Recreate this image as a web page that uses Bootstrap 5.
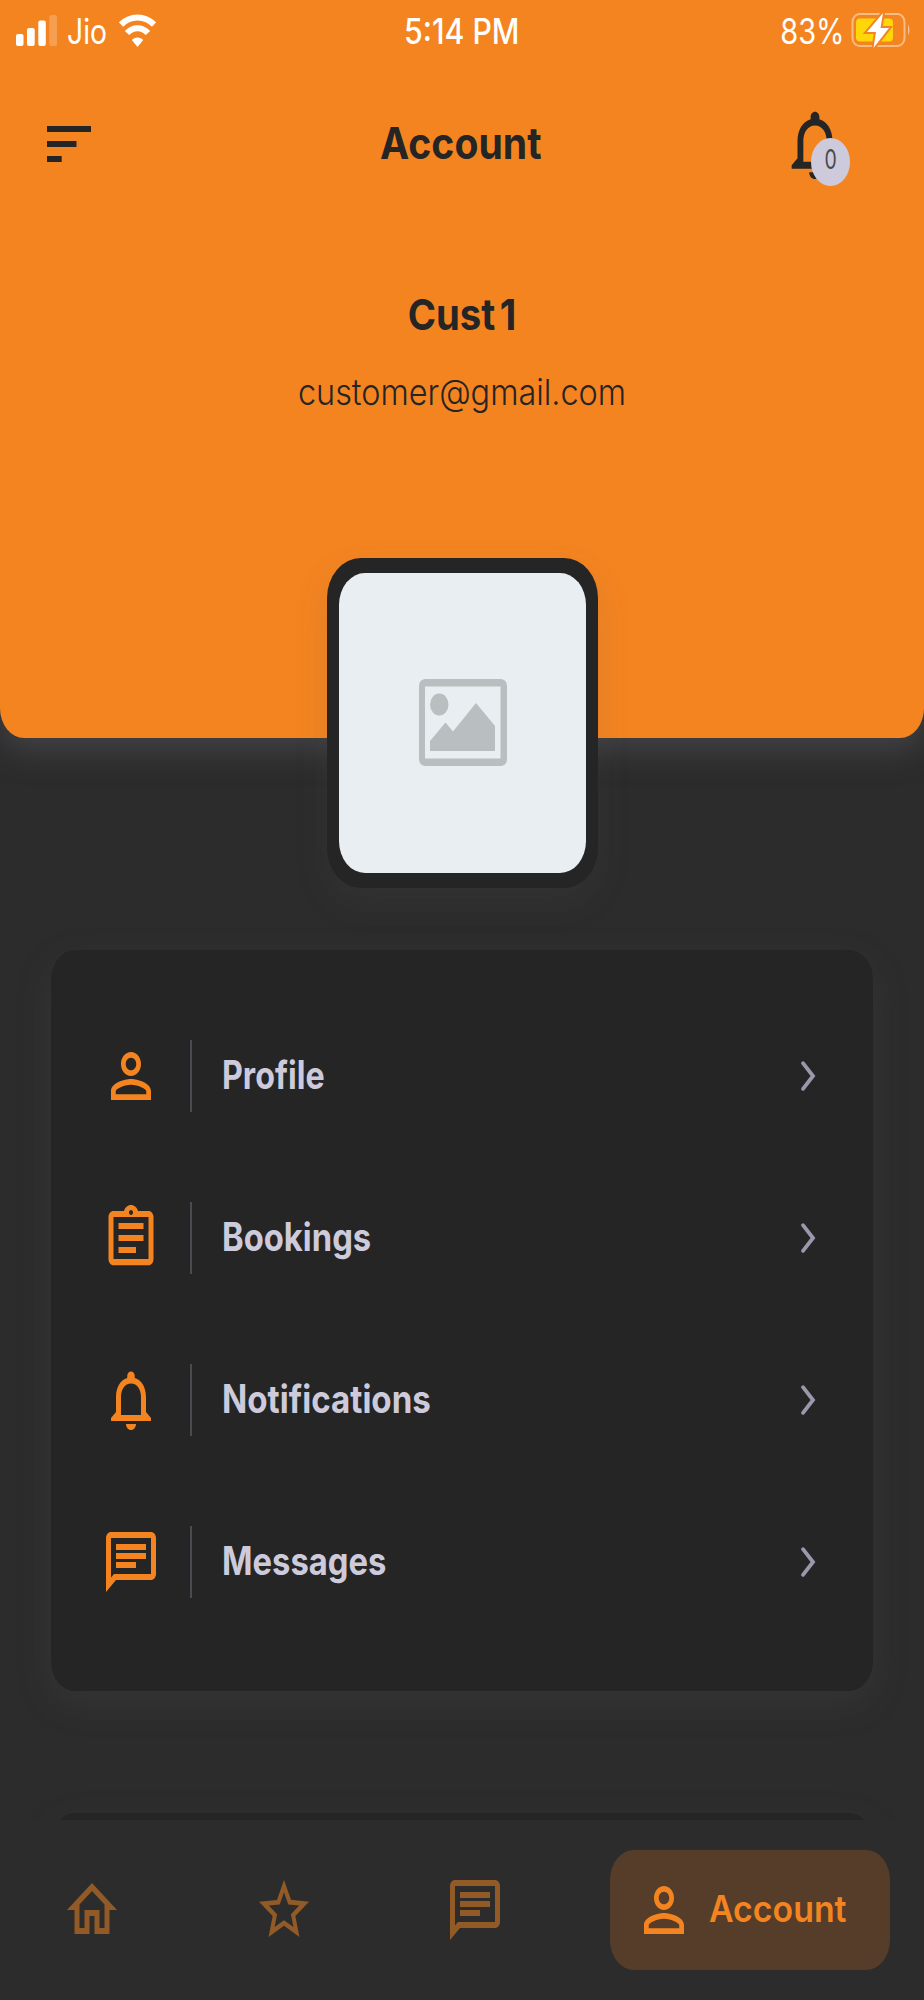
<!DOCTYPE html>
<html lang="en">
<head>
<meta charset="utf-8">
<meta name="viewport" content="width=device-width, initial-scale=1">
<title>Account</title>
<link href="https://cdn.jsdelivr.net/npm/bootstrap@5.3.0/dist/css/bootstrap.min.css" rel="stylesheet">
<style>
  :root { --brand: #f48420; --ink: #252525; --lilac: #cdcbdb; }
  body { font-family: Inter, "Liberation Sans", sans-serif; background: #2c2c2c; color: var(--ink); }
  .screen { height: 2000px; }
  svg { display: block; flex: none; }
  .tx { display: inline-block; white-space: nowrap; line-height: 1.2; }
  .from-start { transform-origin: left center; }
  .from-end { transform-origin: right center; }

  .hero { height: 738px; background: var(--brand); border-radius: 0 0 24px 24px / 0 0 30px 30px; box-shadow: 0 13px 30px rgba(88, 88, 96, .5); z-index: 1; }
  .status { height: 62px; padding: 0 13px 0 16px; color: #fff; font-size: 35px; }
  .jio { transform: scaleX(.81); font-weight: 400; margin-left: 9px; width: 52px; }
  .clock { transform: scaleX(.865); font-weight: 500; }
  .percent { transform: scaleX(.83); font-weight: 400; margin-right: 6px; }
  .appbar { height: 84px; margin-top: 40px; padding: 0 74px 0 47px; }
  .title-txt { font-size: 44px; font-weight: 700; transform: scaleX(.89); margin: -2px 2px 0 0; }
  .count { left: 31px; top: 35px; width: 39px; height: 48px; border-radius: 50%; background: var(--lilac); color: #4a4a4e; font-size: 27px; font-weight: 400; padding-bottom: 3px; }
  .count .tx { transform: scaleX(.72); }
  .who { font-size: 43px; font-weight: 700; transform: scaleX(.89); word-spacing: -5px; line-height: 52px; margin-top: 102px; }
  .mail { font-size: 36px; font-weight: 300; transform: scaleX(.9); line-height: 44px; margin-top: 30px; }

  .avatar { left: 50%; margin-left: -135.5px; top: 557.5px; width: 271px; height: 330px; padding: 15px 12px; background: var(--ink); border-radius: 34px / 40px; box-shadow: 0 14px 34px rgba(92, 92, 100, .14); }
  .avatar-in { background: #e8eef1; border-radius: 26px / 32px; padding-left: 1px; }

  .panel { margin: 0 51px; background: var(--ink); border-radius: 24px / 30px; box-shadow: 0 12px 36px rgba(92, 92, 100, .2); }
  .menu { margin-top: 212px; height: 741px; padding-top: 90px; }
  .line { height: 72px; margin-bottom: 90px; padding: 0 57px 0 50px; color: var(--brand); }
  .line .rule { width: 2px; height: 72px; background: #4a4a50; margin: 0 31px 0 29px; }
  .line .tx { font-size: 39px; font-weight: 650; color: var(--lilac); margin: -2px 0 0 -1px; }
  .next-panel { margin-top: 122px; height: 200px; }

  .tabs { height: 180px; background: #2c2c2c; color: #925a27; padding: 30px 34.5px 30px 62px; gap: 131.5px; z-index: 2; }
  .tabs a { color: inherit; }
  .pill { width: 280px; height: 120px; border-radius: 24px / 30px; background: #553d2a; padding-left: 24px; margin-left: -27px; }
  .tabs .pill { color: var(--brand); }
  .pill .tx { font-size: 37px; font-weight: 600; transform: scaleX(.915); margin: -2px 0 0 15px; }
</style>
</head>
<body>
<svg width="0" height="0" class="position-absolute" aria-hidden="true">
  <symbol id="person" viewBox="0 0 24 24" preserveAspectRatio="none"><path d="M12 5.9c1.16 0 2.1.94 2.1 2.1s-.94 2.1-2.1 2.1S9.900 9.160 9.900 8s.94-2.100 2.100-2.100m0 9c2.970 0 6.100 1.460 6.100 2.100v1.100H5.900V17c0-.64 3.130-2.100 6.100-2.100M12 4C9.790 4 8 5.790 8 8s1.790 4 4 4 4-1.790 4-4-1.790-4-4-4zm0 9c-2.670 0-8 1.340-8 4v3h16v-3c0-2.660-5.330-4-8-4z"/></symbol>
  <symbol id="clip" viewBox="0 0 24 24" preserveAspectRatio="none"><path fill-rule="evenodd" d="M7 15h7v2H7zM7 11h10v2H7zM7 7h10v2H7zM19 3h-4.180C14.400 1.840 13.300 1 12 1s-2.400.84-2.820 2H5c-1.100 0-2 .9-2 2v14c0 1.200.9 2.100 2 2.100h14c1.100 0 2-.9 2-2.100V5c0-1.100-.9-2-2-2zm-7-.3c.45 0 .8.35.8.8s-.35.8-.8.8-.8-.35-.8-.8.35-.8.8-.8zM19 19H5V5h14v14z"/></symbol>
  <symbol id="bell" viewBox="0 0 24 24" preserveAspectRatio="none"><path fill-rule="evenodd" d="M12 22c1.100 0 2-.9 2-2h-4c0 1.100.9 2 2 2zm6-6v-5c0-3.070-1.630-5.640-4.500-6.320V4c0-.83-.67-1.500-1.500-1.500s-1.500.67-1.500 1.500v.68C7.640 5.360 6 7.920 6 11v5l-2 2v1h16v-1l-2-2zm-2 1H8v-6c0-2.480 1.510-4.500 4-4.500s4 2.020 4 4.500v6z"/></symbol>
  <symbol id="chat" viewBox="0 0 24 24" preserveAspectRatio="none"><path d="M4 4h16v12H5.170L4 17.170V4m0-2c-1.100 0-1.990.9-1.990 2L2 22l4-4h14c1.100 0 2-.9 2-2V4c0-1.100-.9-2-2-2H4zm2 10h8v2H6v-2zm0-3h12v2H6V9zm0-3h12v2H6V6z"/></symbol>
  <symbol id="home" viewBox="0 0 24 24" preserveAspectRatio="none"><path d="M12 5.690l5 4.500V18h-2v-6H9v6H7v-7.810l5-4.500M12 3L2 12h3v8h6v-6h2v6h6v-8h3L12 3"/></symbol>
  <symbol id="star" viewBox="0 0 24 24" preserveAspectRatio="none"><path d="M22 9.240l-7.190-.62L12 2 9.190 8.630 2 9.240l5.460 4.730L5.820 21 12 17.270 18.180 21l-1.630-7.030L22 9.240zM12 15.400l-3.760 2.270 1-4.280-3.320-2.880 4.380-.38L12 6.100l1.710 4.040 4.380.38-3.320 2.880 1 4.280L12 15.400z"/></symbol>
  <symbol id="next" viewBox="0 0 16 32"><path d="M3 3.200L13 16L3 28.800" fill="none" stroke="#9a98ab" stroke-width="3.800" stroke-linecap="round"/></symbol>
</svg>

<div class="screen d-flex flex-column position-relative overflow-hidden">
  <header class="hero position-relative flex-shrink-0 text-center">
    <div class="status position-relative d-flex align-items-center justify-content-between">
      <div class="d-flex align-items-center">
        <svg width="42" height="32" fill="#fff"><rect y="19" width="7.500" height="12" rx="2"/><rect x="11" y="13" width="7.700" height="18" rx="2"/><rect x="22.300" y="5.500" width="7.500" height="25.500" rx="2"/><rect x="33.300" y="0" width="7.700" height="31" rx="2" opacity=".22"/></svg>
        <span class="tx jio from-start text-start">Jio</span>
        <svg width="37" height="34" viewBox="0 0 37 34" fill="none" stroke="#fff"><path d="M2 10.500C11.500 1.200 25.500 1.200 35 10.500" stroke-width="6"/><path d="M8 19C14 12.700 23 12.700 29 19" stroke-width="6"/><path d="M18.500 33L12.800 26C15.500 22.500 21.500 22.500 24.200 26Z" fill="#fff" stroke="none"/></svg>
      </div>
      <div class="d-flex align-items-center">
        <span class="tx percent from-end">83%</span>
        <svg width="60" height="38" viewBox="0 0 60 38"><rect x="1.500" y="2" width="52" height="32" rx="7" ry="8" fill="none" stroke="#fff" stroke-opacity=".45" stroke-width="2"/><path d="M57 12.500q3 5 0 11z" fill="#fff" opacity=".5"/><rect x="5" y="6.500" width="37" height="23" rx="4" fill="#ffd60a"/><path d="M32 1L16 20H25L22.500 36L38 16H29.500Z" fill="#fff" stroke="#f48420" stroke-width="4" paint-order="stroke"/></svg>
      </div>
      <div class="position-absolute top-0 start-0 w-100 h-100 d-flex align-items-center justify-content-center"><span class="tx clock">5:14 PM</span></div>
    </div>
    <div class="appbar position-relative d-flex align-items-center justify-content-between">
      <svg width="44" height="36" fill="#252525"><path d="M0 0h44v6H0zM0 15h29.500v6H0zM0 30h14.700v6H0z"/></svg>
      <div class="position-absolute top-0 start-0 w-100 h-100 d-flex align-items-center justify-content-center"><span class="tx title-txt">Account</span></div>
      <div class="position-relative">
        <svg width="70" height="83" fill="#252525"><use href="#bell"/></svg>
        <span class="count position-absolute d-flex align-items-center justify-content-center"><span class="tx">0</span></span>
      </div>
    </div>
    <h1 class="tx who mb-0 d-block">Cust 1</h1>
    <p class="tx mail mb-0 d-block">customer@gmail.com</p>
    <div class="avatar position-absolute">
      <div class="avatar-in w-100 h-100 d-flex align-items-center justify-content-center">
        <svg width="88" height="87" viewBox="0 0 88 87" fill="#b9bec1"><path fill-rule="evenodd" d="M6 0H82Q88 1 88 7V80Q88 86 82 87H6Q0 86 0 80V7Q0 1 6 0ZM6 7.500V79.500H81.500V7.500Z"/><ellipse cx="20.300" cy="25.500" rx="9.200" ry="11"/><path d="M11 72V62L26.500 43.500L34 52.500L57 24L76 47V72Z"/></svg>
      </div>
    </div>
  </header>

  <main class="flex-grow-1 overflow-hidden">
    <div class="panel menu">
      <div class="line d-flex align-items-center"><svg width="60" height="72" fill="currentColor"><use href="#person"/></svg><span class="rule"></span><span class="tx from-start" style="transform:scaleX(.825)">Profile</span><svg class="ms-auto" width="16" height="32"><use href="#next"/></svg></div>
      <div class="line d-flex align-items-center"><svg width="60" height="72" fill="currentColor"><use href="#clip"/></svg><span class="rule"></span><span class="tx from-start" style="transform:scaleX(.84)">Bookings</span><svg class="ms-auto" width="16" height="32"><use href="#next"/></svg></div>
      <div class="line d-flex align-items-center"><svg width="60" height="72" fill="currentColor"><use href="#bell"/></svg><span class="rule"></span><span class="tx from-start" style="transform:scaleX(.85)">Notifications</span><svg class="ms-auto" width="16" height="32"><use href="#next"/></svg></div>
      <div class="line d-flex align-items-center"><svg width="60" height="72" fill="currentColor"><use href="#chat"/></svg><span class="rule"></span><span class="tx from-start" style="transform:scaleX(.84)">Messages</span><svg class="ms-auto" width="16" height="32"><use href="#next"/></svg></div>
    </div>
    <div class="panel next-panel"></div>
  </main>

  <nav class="tabs position-relative flex-shrink-0 d-flex align-items-center">
    <a href="#"><svg width="60" height="72" fill="currentColor"><use href="#home"/></svg></a>
    <a href="#"><svg width="60" height="72" fill="currentColor"><use href="#star"/></svg></a>
    <a href="#"><svg width="60" height="72" fill="currentColor"><use href="#chat"/></svg></a>
    <a href="#" class="pill flex-shrink-0 d-flex align-items-center text-decoration-none"><svg width="60" height="72" fill="currentColor"><use href="#person"/></svg><span class="tx from-start">Account</span></a>
  </nav>
</div>
<script src="https://cdn.jsdelivr.net/npm/bootstrap@5.3.0/dist/js/bootstrap.bundle.min.js"></script>
</body>
</html>
